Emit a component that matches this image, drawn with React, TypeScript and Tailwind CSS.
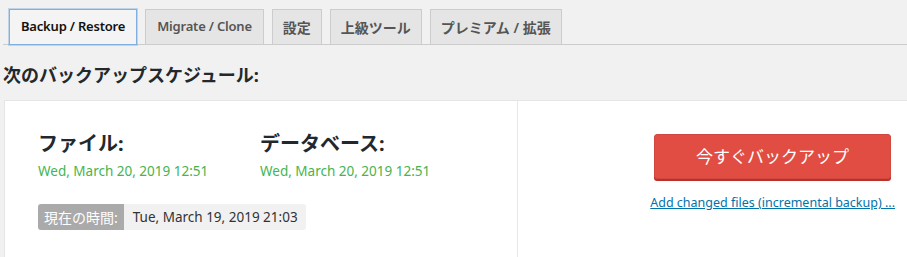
import React from 'react';

const FONT = '"Segoe UI", "Noto Sans", "Noto Sans CJK JP", sans-serif';

const tabs = [
  { label: 'Backup / Restore', active: true, cjk: false },
  { label: 'Migrate / Clone', cjk: false },
  { label: '設定', cjk: true },
  { label: '上級ツール', cjk: true },
  { label: 'プレミアム / 拡張', cjk: true },
];

const NavTab: React.FC<{ label: string; active?: boolean; cjk?: boolean }> = ({ label, active, cjk }) => (
  <div
    className={`h-[36px] -mb-px flex items-center font-semibold border ${
      cjk ? 'px-[10px] text-[14px]' : 'px-[11px] text-[13px] tracking-[-0.2px]'
    } ${
      active
        ? 'bg-[#f4f4f4] border-[#7fb0e0] text-[#111] shadow-[0_0_0_1px_rgba(91,157,217,0.35)]'
        : 'bg-[#e5e5e5] border-[#cccccc] text-[#555]'
    }`}
  >
    {label}
  </div>
);

const ScheduleItem: React.FC<{ label: string; date: string }> = ({ label, date }) => (
  <div className="w-[222px]">
    <div className="text-[20px] leading-[26px] font-bold text-[#23282d]">{label}</div>
    <div className="mt-[5px] text-[13.5px] leading-[18px] text-[#46b450]">{date}</div>
  </div>
);

export default function App() {
  return (
    <div className="w-[907px] h-[257px] overflow-hidden bg-[#f1f1f1]" style={{ fontFamily: FONT }}>
      <div className="ml-[3px] pl-[6px] pt-[9px] flex gap-[8px] border-b border-[#cccccc]">
        {tabs.map((t) => (
          <NavTab key={t.label} label={t.label} active={t.active} cjk={t.cjk} />
        ))}
      </div>

      <h2 className="mt-[18px] mb-[13px] ml-[3px] text-[18px] leading-[24px] font-bold text-[#23282d]">
        次のバックアップスケジュール:
      </h2>

      <div className="ml-[4px] h-[157px] bg-white border-l border-t border-[#e5e5e5] flex">
        <div className="w-[513px] border-r border-[#e8e8e8] pl-[33px] pt-[30px]">
          <div className="flex">
            <ScheduleItem label="ファイル:" date="Wed, March 20, 2019 12:51" />
            <ScheduleItem label="データベース:" date="Wed, March 20, 2019 12:51" />
          </div>
          <div className="mt-[24px] inline-flex h-[26px] rounded-[3px] overflow-hidden">
            <span className="bg-[#aaaaaa] text-white text-[14px] px-[6px] flex items-center">現在の時間:</span>
            <span className="bg-[#f1f1f1] text-[#333] text-[13.5px] pl-[9px] pr-[8px] flex items-center">
              Tue, March 19, 2019 21:03
            </span>
          </div>
        </div>

        <div className="flex-1 flex justify-end pr-[12px] pt-[33px]">
          <div className="flex flex-col items-center">
            <button className="w-[237px] h-[45px] rounded-[3px] bg-[#e14d43] border border-[#d0473d] text-white text-[17px] shadow-[0_2px_0_#b8322a]">
              今すぐバックアップ
            </button>
            <a href="#" className="mt-[15px] text-[12.5px] leading-[18px] text-[#0073aa] underline">
              Add changed files (incremental backup) ...
            </a>
          </div>
        </div>
      </div>
    </div>
  );
}
